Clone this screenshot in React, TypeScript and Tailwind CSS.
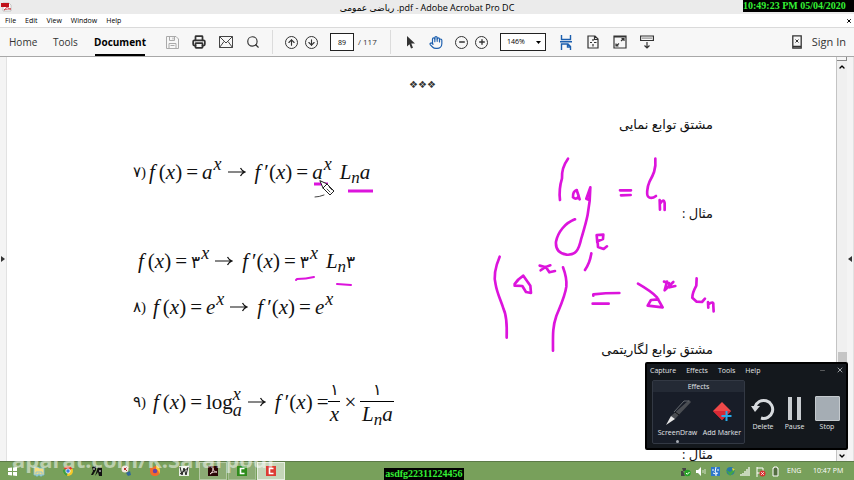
import React from 'react';
import { ArrowDown, ArrowUp, ChevronDown, ChevronUp, Hand, Mail, Minus, Plus, Printer, Save, Search, X } from 'lucide-react';

const menuItems = ['File', 'Edit', 'View', 'Window', 'Help'];

const CircleButton = ({ label, children }: { label: string; children: React.ReactNode }) => (
  <button
    type="button"
    aria-label={label}
    className="flex size-[13px] shrink-0 items-center justify-center rounded-full border border-[#333]"
  >
    {children}
  </button>
);

const IconButton = ({ label, children }: { label: string; children: React.ReactNode }) => (
  <button type="button" aria-label={label} className="flex size-[14px] shrink-0 items-center justify-center">
    {children}
  </button>
);

const Separator = () => <div className="h-6 w-px shrink-0 bg-[#dcdcdc]" />;

const TitleBar = () => (
  <header className="relative flex h-[14px] shrink-0 items-center justify-center bg-[#ebebeb]">
    <svg className="absolute top-[2px] left-[1px]" width="11" height="10" viewBox="0 0 11 10">
      <path d="M2 1h6l2 2v6H2z" fill="#fff" stroke="#999" strokeWidth="0.5" />
      <path d="M0 1h8v4H0z" fill="#c1121b" />
      <path d="M3 8c2-1 3-3 3-5 0 3 2 4 4 4-2 0-5 0-7 1z" fill="none" stroke="#c1121b" strokeWidth="0.7" />
    </svg>
    <h1 className="text-[9px] leading-none whitespace-pre text-black">
      <bdi dir="rtl">ریاضی عمومی</bdi> .pdf - Adobe Acrobat Pro DC
    </h1>
    <time className="absolute top-0 right-0 flex h-3 w-[111px] items-center bg-black font-['Liberation_Serif',serif] text-[10px] leading-none font-bold whitespace-nowrap text-[#35f035]">
      10:49:23 PM 05/04/2020
    </time>
  </header>
);

const MenuBar = () => (
  <div className="flex h-[13px] shrink-0 items-center justify-between bg-white pr-[2px] pl-[5px]">
    <nav className="flex gap-[9px]">
      {menuItems.map((item) => (
        <button key={item} type="button" className="text-[7px] leading-none text-black">
          {item}
        </button>
      ))}
    </nav>
    <button type="button" aria-label="Close document">
      <X size={6} strokeWidth={4} />
    </button>
  </div>
);

const Toolbar = () => (
  <div className="flex h-[30px] shrink-0 items-center border-t border-b border-t-[#dadada] border-b-[#a8a8a8] bg-[#f7f7f7] pr-2 pl-[9px] text-[#333]">
    <nav className="flex h-full items-center text-[10px]">
      <a href="#home" className="w-11">Home</a>
      <a href="#tools" className="w-[42px]">Tools</a>
      <a href="#document" className="flex h-full w-[50px] items-center justify-center border-t-2 border-b-2 border-t-transparent border-b-black font-bold text-black">
        Document
      </a>
    </nav>
    <div className="ml-5 flex gap-[13px]">
      <IconButton label="Save">
        <svg width="13" height="13" viewBox="0 0 13 13" fill="none" stroke="#aaa">
          <path d="M.5.5h9.500l2.500 2.500v9.500H.5zM3.500.5v4h5v-4M3 12.500v-5h7v5M4.500 9.500h4M7 1.500v2" />
        </svg>
      </IconButton>
      <IconButton label="Print"><Printer size={14} color="#333" strokeWidth={3} /></IconButton>
      <IconButton label="Email">
        <svg width="14" height="12" viewBox="0 0 14 12" fill="none" stroke="#444">
          <path d="M.5.5h13v11H.5zM.5.5L7 7l6.500-6.500M.5 11.500L5 5.500M13.500 11.500L9 5.500" />
        </svg>
      </IconButton>
      <IconButton label="Find"><Search size={14} strokeWidth={2} /></IconButton>
    </div>
    <div className="ml-3 flex items-center gap-3">
      <Separator />
      <div className="flex gap-[7px]">
        <CircleButton label="Previous page"><ArrowUp size={9} strokeWidth={3} /></CircleButton>
        <CircleButton label="Next page"><ArrowDown size={9} strokeWidth={3} /></CircleButton>
      </div>
      <div className="flex items-center gap-1 text-[8px]">
        <input
          aria-label="Page number"
          defaultValue="89"
          className="h-[18px] w-6 border border-[#222] bg-white text-center text-[7px] text-black"
        />
        <span className="w-5 whitespace-nowrap">/ 117</span>
      </div>
      <Separator />
    </div>
    <div className="ml-3 flex items-center">
      <IconButton label="Select">
        <svg width="9" height="13" viewBox="0 0 9 13" fill="#333">
          <path d="M1 0v10.500l2.500-2.300L5 12.500l2-.8-1.700-4.100H9z" />
        </svg>
      </IconButton>
      <div className="mr-3 ml-3">
        <IconButton label="Pan"><Hand size={15} color="#1c5fae" strokeWidth={2} /></IconButton>
      </div>
      <div className="flex gap-[7px]">
        <CircleButton label="Zoom out"><Minus size={8} strokeWidth={4} /></CircleButton>
        <CircleButton label="Zoom in"><Plus size={8} strokeWidth={4} /></CircleButton>
      </div>
      <div className="relative ml-3">
        <select
          aria-label="Zoom level"
          className="block h-[18px] w-[46px] appearance-none border border-[#222] bg-white pl-[6px] text-[7px] text-black"
        >
          <option>146%</option>
        </select>
        <svg className="pointer-events-none absolute top-2 right-[5px]" width="5" height="3" viewBox="0 0 5 3">
          <path d="M0 0h5L2.500 3z" />
        </svg>
      </div>
    </div>
    <div className="ml-[13px] flex items-center gap-[13px]">
      <IconButton label="Fit width">
        <svg width="12" height="15" viewBox="0 0 12 15" fill="none" stroke="#1c5fae" strokeWidth="1.400">
          <path d="M1.500 0v4.500h9V0M0 6.700h12M1.500 15V9H8l2.500 2.500V15M7.500 9v3h3" />
        </svg>
      </IconButton>
      <IconButton label="Fit page">
        <svg width="12" height="14" viewBox="0 0 12 14" fill="none" stroke="#333" strokeWidth="1.200">
          <path d="M1 1h7l3 3v9H1zM7.500 1v3.500H11M6 4v2M6 9v2.500M3 7.500h2M7 7.500h2.500" />
        </svg>
      </IconButton>
      <IconButton label="Full screen">
        <svg width="14" height="14" viewBox="0 0 14 14" fill="none" stroke="#333" strokeWidth="1.200">
          <path d="M1 1h12v12H1zM1 2h12M8 6l3-2.500M8.500 3.700H11V6M6 8.500L3 11M3 8.500V11h2.500" />
        </svg>
      </IconButton>
      <IconButton label="Show keyboard">
        <svg width="14" height="14" viewBox="0 0 14 14" fill="none" stroke="#333" strokeWidth="1.200">
          <path d="M.6 1h12.800v4.500H.6z" />
          <path d="M2.500 3.200h9" strokeDasharray="1 1" />
          <path d="M7 7v6M4.500 10.500L7 13l2.500-2.500" />
        </svg>
      </IconButton>
    </div>
    <div className="ml-auto flex items-center gap-[10px]">
      <svg width="10" height="14" viewBox="0 0 10 14" fill="none" stroke="#333">
        <path d="M.8.8h8.400v12.400H.8zM1 11.500h8" strokeWidth="1.300" />
        <path d="M3.500 4.500l3 3M6.500 4.500l-3 3" />
      </svg>
      <a href="#signin" className="text-[11px] whitespace-nowrap">Sign In</a>
    </div>
  </div>
);

const Fn = ({ prime = false }: { prime?: boolean }) => (
  <span className={prime ? 'pl-[3px]' : ''}>
    <i className="mr-1">f</i>
    {prime && <span>′</span>}
    (<i>x</i>)
  </span>
);

const Power = ({ base, italic = true }: { base: string; italic?: boolean }) => (
  <span>
    {italic ? <i>{base}</i> : <span className="text-[17px]">{base}</span>}
    <sup className="pl-px text-[18px] italic">x</sup>
  </span>
);

const Ln = ({ arg, italic = true }: { arg: string; italic?: boolean }) => (
  <span>
    <i>L</i>
    <sub className="text-[17px] italic">n</sub>
    {italic ? <i>{arg}</i> : <span className="text-[17px]">{arg}</span>}
  </span>
);

const Arrow = () => (
  <svg className="mx-[2px] shrink-0" width="18" height="10" viewBox="0 0 18 10" fill="none" stroke="#111" strokeWidth="1.200">
    <path d="M0 5h17M12.500 1Q14 4 17 5Q14 6 12.500 9" />
  </svg>
);

const Formula = ({ no, tight = false, children }: { no?: string; tight?: boolean; children: React.ReactNode }) => (
  <div
    dir="ltr"
    className={`flex h-8 items-center gap-1 font-['Liberation_Serif','DejaVu_Sans',serif] text-[21px] leading-none whitespace-nowrap text-[#111] ${
      no ? 'pl-[126px]' : 'pl-[131px]'
    }`}
  >
    {no && <span className={`text-[15px] ${tight ? 'w-3' : 'w-4'}`}>{no}</span>}
    {children}
  </div>
);

const Heading = ({ children }: { children: React.ReactNode }) => (
  <p dir="rtl" className="h-6 pr-[123px] text-[13px] leading-6 text-[#111]">
    {children}
  </p>
);

const Page = () => (
  <main className="min-w-0 flex-1 overflow-hidden bg-white">
    <div className="flex h-[55px] items-center justify-center pl-[2px] text-[10px] text-[#333]">❖❖❖</div>
    <Heading>مشتق توابع نمایی</Heading>
    <div className="mt-5">
      <Formula no="۷)" tight>
        <Fn /> <span>=</span> <Power base="a" /> <Arrow /> <Fn prime /> <span>=</span> <Power base="a" />
        <span className="ml-1"><Ln arg="a" /></span>
      </Formula>
    </div>
    <div className="mt-[13px]">
      <Heading>مثال :</Heading>
    </div>
    <div className="mt-5">
      <Formula>
        <Fn /> <span>=</span> <Power base="۳" italic={false} /> <Arrow /> <Fn prime /> <span>=</span>
        <Power base="۳" italic={false} />
        <span className="ml-1"><Ln arg="۳" italic={false} /></span>
      </Formula>
    </div>
    <div className="mt-[14px]">
      <Formula no="۸)">
        <Fn /> <span>=</span> <Power base="e" /> <Arrow /> <Fn prime /> <span>=</span> <Power base="e" />
      </Formula>
    </div>
    <div className="mt-[14px]">
      <Heading>مشتق توابع لگاریتمی</Heading>
    </div>
    <div className="mt-[25px]">
      <Formula no="۹)">
        <Fn /> <span>=</span>
        <span className="flex items-center">
          log
          <span className="flex flex-col text-[18px] leading-4 italic">
            <span>x</span>
            <span>a</span>
          </span>
        </span>
        <Arrow /> <Fn prime />
        <span className="flex items-center">
          =
          <span className="flex w-3 flex-col items-center">
            <span className="flex h-6 w-full items-center justify-center border-b border-black text-[16px]">۱</span>
            <i className="h-6 leading-6">x</i>
          </span>
        </span>
        <span>×</span>
        <span className="flex w-[34px] flex-col items-center">
          <span className="flex h-6 w-full items-center justify-center border-b border-black text-[16px]">۱</span>
          <span className="h-6 leading-6"><Ln arg="a" /></span>
        </span>
      </Formula>
    </div>
    <div className="mt-6">
      <Heading>مثال :</Heading>
    </div>
  </main>
);

// Pen strokes drawn by the presenter over the document
const Ink = () => (
  <svg
    className="pointer-events-none absolute top-0 left-0"
    width="854"
    height="480"
    viewBox="0 0 854 480"
    fill="none"
    stroke="#dc14dc"
    strokeLinecap="round"
    strokeLinejoin="round"
  >
    <g transform="translate(480 150) scale(0.3333)" strokeWidth="8">
      <path d="M264 26Q244 54 246 85Q236 118 240 150" />
      <path d="M290 120Q278 124 279 142Q290 151 296 138L290 120L299 148" />
      <path d="M331 112L319 146L328 150L331 112C331 180 316 225 304 265C296 303 286 316 260 314C237 311 226 300 228 275C234 246 255 219 285 208L278 211" />
      <path d="M420 121L453 121M423 136L452 135M526 26C529 58 519 76 509 94C501 112 498 139 507 142Q516 147 528 138" />
      <path d="M539 150L540 179M541 160Q551 144 554 159L554 180" />
      <path d="M352 278L350 255L370 254L369 267L353 274L354 291L371 297L381 289" />
      <path d="M334 310Q330 338 315 360" />
      <path d="M59 320C47 348 39 375 47 404C51 429 63 452 71 478Q82 500 80 563" />
      <path d="M104 402Q113 388 130 377L151 407L153 429L138 426L127 408L104 407Z" />
      <path d="M179 347L198 352L208 367L225 363M211 346Q196 350 182 361" />
      <path d="M249 352C257 373 261 388 259 410C255 440 239 473 229 498C217 532 219 560 219 602" />
      <path d="M340 437L340 433Q375 429 418 429M338 461L386 461" />
      <path d="M474 401Q514 424 531 442L548 472L503 467L513 450L535 448" />
      <path d="M552 395L567 399L569 412L586 408M580 396L554 421L561 395" />
      <path d="M650 385L649 407Q637 429 637 443L650 455L666 456L675 446M684 456L685 473M685 463Q702 451 700 466L701 484" />
    </g>
    <path d="M314 184H328M348 191H373" strokeWidth="3" strokeLinecap="butt" />
    <path d="M296 280L297 279Q306 279 314 277M337 284L351 285" strokeWidth="2" />
    <path d="M315 197Q319 197 324 195" stroke="#444" strokeWidth="1" />
    <path d="M320 181l3 7 7 7 4-4-7-7zM323 188l4-4" fill="#fff" stroke="#222" strokeWidth="1" />
    <path d="M327 189l3 3M329 187l3 3" stroke="#222" strokeWidth="0.8" />
  </svg>
);

const Scrollbar = () => (
  <div className="flex w-[11px] shrink-0 flex-col items-center border-l border-[#c4c4c4] bg-[#f0f0f0]">
    <div className="h-1 w-full border-r border-b border-[#888] bg-[#f7f7f7]" />
    <button type="button" aria-label="Scroll up" className="mt-[2px]"><ChevronUp size={8} strokeWidth={4} /></button>
    <div className="flex-1" />
    <div className="mb-[90px] h-[10px] w-[9px] bg-[#c5c5c5]" />
    <button type="button" aria-label="Scroll down" className="mb-px"><ChevronDown size={8} strokeWidth={4} /></button>
  </div>
);

const Gutter = ({ flip = false }: { flip?: boolean }) => (
  <div className="flex w-[7px] shrink-0 items-center justify-center border-r border-[#e2e2e2] bg-[#f4f4f4]">
    <svg width="4" height="6" viewBox="0 0 4 6">
      <path d={flip ? 'M4 0v6L0 3z' : 'M0 0v6l4-3z'} fill="#333" />
    </svg>
  </div>
);

const Recorder = () => (
  <section className="absolute right-[6px] bottom-[30px] flex h-[88px] w-[203px] flex-col rounded-[2px] border-2 border-black bg-[#14181d] text-[7px] leading-none text-[#e3e6e9]">
    <div className="flex h-3 items-center gap-[10px] pl-[3px]">
      <button type="button">Capture</button>
      <button type="button">Effects</button>
      <button type="button">Tools</button>
      <button type="button">Help</button>
      <button type="button" aria-label="Minimize" className="ml-auto"><Minus size={7} color="#888" /></button>
      <button type="button" aria-label="Close" className="mr-[2px]"><X size={8} /></button>
    </div>
    <div className="flex pl-[5px]">
      <div className="mt-1 h-[64px] w-[93px] rounded-[2px] border border-[#333944] bg-[#181d28]">
        <h2 className="flex h-[11px] items-center justify-center bg-[#242a35]">Effects</h2>
        <div className="flex">
          <button type="button" className="flex w-[49px] flex-col items-center">
            <svg className="mt-[6px]" width="30" height="29" viewBox="0 0 30 29">
              <path d="M26 2l2 2L12 21l-4-3z" fill="#4b4e53" />
              <path d="M11 14L21 3h5" fill="none" stroke="#666b70" />
              <path d="M8 18l4 3-9 6z" fill="#e8e8e8" />
              <path d="M12 14l4 3" stroke="#111" />
            </svg>
            <span className="mt-[2px] whitespace-nowrap">ScreenDraw</span>
            <span className="mt-1 size-[3px] rounded-full bg-[#a8adb5]" />
          </button>
          <button type="button" className="flex w-10 flex-col items-center">
            <svg className="mt-[9px]" width="21" height="23" viewBox="0 0 21 23">
              <path d="M10 1l9 9-9 9L1 10z" fill="#ef4949" />
              <path d="M1 10l9 9 9-9z" fill="#d82835" />
              <path d="M14.500 10v10M9.500 15h10" stroke="#29a9e8" strokeWidth="2" />
            </svg>
            <span className="mt-[5px] whitespace-nowrap">Add Marker</span>
          </button>
        </div>
      </div>
      <div className="flex pt-5">
        <button type="button" className="ml-[5px] flex w-[26px] flex-col items-center">
          <svg width="25" height="25" viewBox="0 0 25 25" fill="none" stroke="#d7dadd" strokeWidth="3">
            <path d="M4 11a9 9 0 1 1 6 11" />
            <path d="M0 10h9l-5 6z" fill="#d7dadd" stroke="none" />
          </svg>
          <span className="mt-[2px]">Delete</span>
        </button>
        <button type="button" className="ml-[6px] flex w-[25px] flex-col items-center">
          <svg width="15" height="25" viewBox="0 0 15 25" fill="#c9cdd1">
            <path d="M1 1h4v23H1zM10 1h4v23h-4z" />
          </svg>
          <span className="mt-[2px]">Pause</span>
        </button>
        <button type="button" className="ml-[7px] flex w-[26px] flex-col items-center">
          <span className="size-[25px] rounded-[1px] border border-[#c5cace] bg-[#a5adb4]" />
          <span className="mt-[2px]">Stop</span>
        </button>
      </div>
    </div>
  </section>
);

const pinnedApps = [
  {
    name: 'File Explorer',
    tile: '',
    icon: <path d="M1 2h4l1 1h5v7H1zM3 9V7h6v4H7V9H5v2H3z" fill="#f5dd83" stroke="#78c0e4" strokeWidth="0.800" />,
  },
  {
    name: 'Chrome',
    tile: '',
    icon: (
      <>
        <circle cx="6" cy="6" r="5" fill="#f8c928" />
        <path d="M6 6L1.700 3.500A5 5 0 0 1 10.300 3.500z" fill="#dc3d2e" />
        <path d="M6 6L1.700 3.500A5 5 0 0 0 5 11z" fill="#3f9e45" />
        <circle cx="6" cy="6" r="2.200" fill="#3f7be0" stroke="#fff" strokeWidth="0.800" />
      </>
    ),
  },
  {
    name: 'Reader',
    tile: '',
    icon: (
      <>
        <path d="M1 2l4-1v4L2 10H0l2-4zM7 2l4 1v8H8l-1-4-3 4z" fill="#111" />
        <path d="M3 3v2M9 5v2" stroke="#eee" />
      </>
    ),
  },
  {
    name: 'Snipping Tool',
    tile: '',
    icon: (
      <>
        <circle cx="5" cy="4" r="3.500" fill="#f2e6df" />
        <path d="M4 3l3 3M7 2L4 5" stroke="#b53030" />
        <path d="M6 8l4-2 1 4-3 1z" fill="#31679b" />
      </>
    ),
  },
  {
    name: 'Firefox',
    tile: '',
    icon: (
      <>
        <path d="M6 1c3 0 5 2 5 5s-2 5-5 5-5-2-5-5V2l2 1z" fill="#f26a2c" />
        <path d="M7 0c4 2 5 6 3 9 0-3-1-4-3-5z" fill="#f8cc36" />
        <circle cx="6" cy="6" r="2.200" fill="#6741a8" />
      </>
    ),
  },
  {
    name: 'Editor',
    tile: '',
    icon: (
      <>
        <path d="M1 1h10v10H1z" fill="#e9eee5" />
        <path d="M2 2l2 8 2-7 2 7 2-8M2 9l8-6" fill="none" stroke="#222" />
      </>
    ),
  },
  {
    name: 'Acrobat',
    tile: 'border border-[#b4caa4] bg-[#8cab74]',
    icon: (
      <>
        <path d="M1 1h10v10H1z" fill="#2a0606" />
        <path d="M3 9c2-1 3-3 3-6 0 3 2 4 4 4-2 0-5 0-7 2z" fill="none" stroke="#f4dada" strokeWidth="0.900" />
      </>
    ),
  },
  {
    name: 'Camtasia',
    tile: 'border border-[#a5c094] bg-[#8cab74]',
    icon: (
      <>
        <path d="M1 1h10v10H1z" fill="#2f8c1c" />
        <path d="M8.500 3.500h-4v5h4" fill="none" stroke="#fff" strokeWidth="1.600" />
      </>
    ),
  },
  {
    name: 'Camtasia Recorder',
    tile: 'border border-[#e6eee0] bg-[#c5d5b9]',
    icon: (
      <>
        <path d="M1 1h10v10H1z" fill="#dd3b34" />
        <path d="M8.500 3.500h-4v5h4" fill="none" stroke="#fff" strokeWidth="1.600" />
      </>
    ),
  },
];

const trayIcons = [
  {
    name: 'Safely remove hardware',
    icon: (
      <>
        <path d="M2 2h4v3H1v5h4z" fill="#444" />
        <circle cx="7.500" cy="7" r="3.200" fill="#26a326" />
        <path d="M6 7l1.300 1.300L9.500 6" stroke="#fff" fill="none" />
      </>
    ),
  },
  {
    name: 'Volume',
    icon: (
      <>
        <path d="M1 4h2l3-3v9L3 7H1z" fill="#fff" />
        <path d="M8 4v3M10 3v5" stroke="#e9f0e4" strokeWidth="0.800" />
      </>
    ),
  },
  {
    name: 'Finder',
    icon: (
      <>
        <path d="M1 1h9v9H1z" fill="#2e77c9" />
        <path d="M3 3v2M8 3v2M6 1L5 6h1v4M3 7q2.500 2 5 0" stroke="#fff" fill="none" />
      </>
    ),
  },
  {
    name: 'Download manager',
    icon: (
      <>
        <circle cx="5.500" cy="5" r="4" fill="#2877a8" />
        <path d="M1 4l4 2 5-4-1 4-4 4z" fill="#42a544" />
        <path d="M7 2l3 1-2 2z" fill="#f3da35" />
      </>
    ),
  },
  {
    name: 'Network',
    icon: <path d="M1 10V8M3 10V7M5 10V5M7 10V3M9 10V1" stroke="#e9f0e4" strokeWidth="1.400" />,
  },
  {
    name: 'Action center',
    icon: (
      <>
        <path d="M2 1v10M2 2h6v5H2" stroke="#fff" fill="none" />
        <circle cx="7.500" cy="7.500" r="3" fill="#d83131" />
        <path d="M6.300 6.300l2.400 2.400M8.700 6.300L6.300 8.700" stroke="#fff" />
      </>
    ),
  },
  {
    name: 'Battery',
    icon: <path d="M3 2h1V1h3v1h1v8H3z" fill="#536d40" stroke="#fff" />,
  },
];

const Taskbar = () => (
  <footer className="relative flex h-[19px] shrink-0 items-center justify-between border-t border-[#5d7a48] bg-[#78a05b]">
    <div className="flex h-full items-center">
      <button type="button" aria-label="Start" className="flex w-[25px] justify-center">
        <svg width="9" height="9" viewBox="0 0 9 9" fill="#fff">
          <path d="M0 1l4-.5V4H0zM5 .4L9 0v4H5zM0 5h4v3.500L0 8zM5 5h4v4l-4-.4z" />
        </svg>
      </button>
      <div className="flex h-full gap-px">
        {pinnedApps.map((app) => (
          <button
            key={app.name}
            type="button"
            aria-label={app.name}
            className={`flex h-full w-7 items-center justify-center ${app.tile}`}
          >
            <svg width="12" height="12" viewBox="0 0 12 12">{app.icon}</svg>
          </button>
        ))}
      </div>
    </div>
    <div className="flex items-center text-[7px] text-white">
      {trayIcons.map((tray) => (
        <button key={tray.name} type="button" aria-label={tray.name} className="flex w-[15px] justify-center">
          <svg width="11" height="11" viewBox="0 0 11 11">{tray.icon}</svg>
        </button>
      ))}
      <span className="ml-1 w-[26px]">ENG</span>
      <time className="w-[41px] whitespace-nowrap">10:47 PM</time>
    </div>
    <p className="pointer-events-none absolute -top-[15px] left-3 text-[22px] leading-6 font-bold whitespace-nowrap text-white/50">
      aparat.com/K.Safarpour
    </p>
    <p className="absolute bottom-0 left-[45%] flex h-3 items-center bg-black px-px font-['Liberation_Serif',serif] text-[10px] leading-none font-bold text-[#35f035]">
      asdfg22311224456
    </p>
  </footer>
);

const App: React.FC = () => {
  return (
    <div className="relative flex h-screen flex-col overflow-hidden bg-white font-['Open_Sans','Noto_Sans','DejaVu_Sans',sans-serif]">
      <TitleBar />
      <MenuBar />
      <Toolbar />
      <div className="flex min-h-0 flex-1">
        <Gutter />
        <Page />
        <Scrollbar />
        <Gutter flip />
      </div>
      <Ink />
      <Recorder />
      <Taskbar />
    </div>
  );
};

export default App;
